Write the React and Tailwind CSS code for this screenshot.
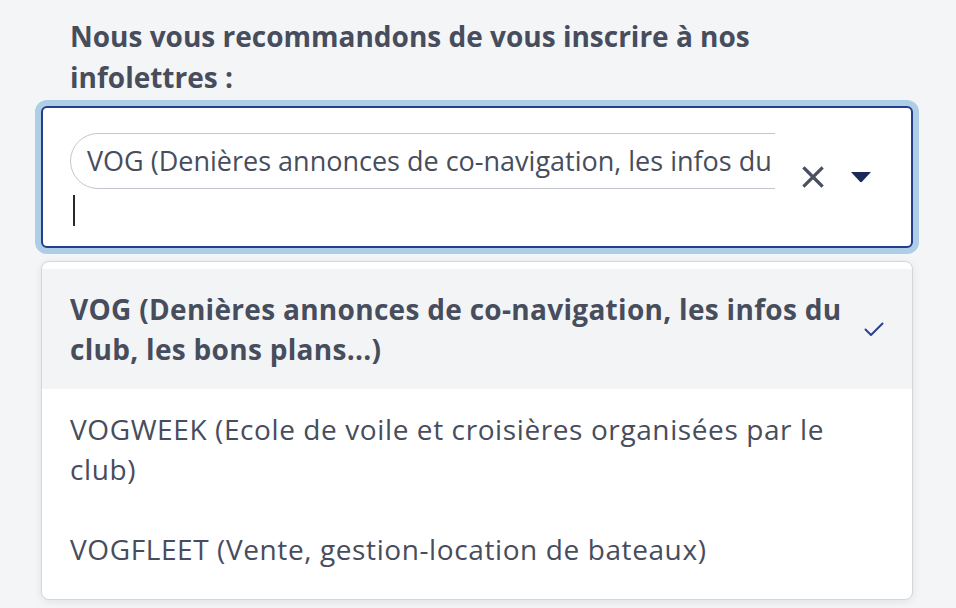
const options = [
  { id: "vog", label: "VOG (Denières annonces de co-navigation, les infos du club, les bons plans...)", selected: true },
  { id: "vogweek", label: "VOGWEEK (Ecole de voile et croisières organisées par le club)", selected: false },
  { id: "vogfleet", label: "VOGFLEET (Vente, gestion-location de bateaux)", selected: false },
];

function ClearIcon() {
  return (
    <svg width="22" height="22" viewBox="0 0 22 22" className="text-[#4b5060]">
      <path d="M2.5 2.5 L19.5 19.5 M19.5 2.5 L2.5 19.5" stroke="currentColor" strokeWidth="3.2" strokeLinecap="square" />
    </svg>
  );
}

function CaretIcon() {
  return (
    <svg width="20" height="11" viewBox="0 0 20 11" className="text-[#1b2a57]">
      <path d="M0 0 H20 L11.2 9.6 Q10 10.8 8.8 9.6 Z" fill="currentColor" />
    </svg>
  );
}

function CheckIcon() {
  return (
    <svg width="20" height="15" viewBox="0 0 20 15" className="text-[#2c418f]">
      <path d="M1.5 7.5 L7 13 L18.5 1.5" stroke="currentColor" strokeWidth="2" fill="none" strokeLinecap="round" strokeLinejoin="round" />
    </svg>
  );
}

export default function App() {
  return (
    <div className="min-h-screen bg-[#f4f5f7] text-[#474d5c]" style={{ fontFamily: '"Open Sans", "Noto Sans", sans-serif' }}>
      <div className="w-[872px] ml-[41px] pt-4">
        <label className="block w-[800px] pl-[29px] text-[28px] font-bold leading-[41px]">
          Nous vous recommandons de vous inscrire à nos infolettres :
        </label>

        <div className="mt-2 flex items-center bg-white border-2 border-[#243d8c] rounded-md ring-[6px] ring-[#aecde6]">
          <div className="flex flex-col pl-[27px] pt-[25px] pb-[20px] w-[732px]">
            <div className="w-[705px] overflow-hidden">
              <span className="inline-flex items-center h-[56px] pl-4 pr-5 border border-[#c2c5ce] rounded-full whitespace-nowrap text-[27px]">
                VOG (Denières annonces de co-navigation, les infos du club, les bons plans...)
              </span>
            </div>
            <div className="mt-[6px] ml-[3px] w-[2px] h-[31px] bg-[#2a2a2a]" />
          </div>
          <div className="flex items-center ml-[27px]">
            <ClearIcon />
            <div className="ml-[27px]">
              <CaretIcon />
            </div>
          </div>
        </div>

        <ul className="mt-[13px] bg-white border border-[#d5d6d9] rounded-lg shadow-[0_2px_8px_rgba(0,0,0,0.08)] pt-[7px] pb-[10px]">
          {options.map((o) => (
            <li
              key={o.id}
              className={
                o.selected
                  ? "flex items-center justify-between bg-[#f3f4f6] pl-[28px] pr-[28px] py-[20px]"
                  : "flex items-center justify-between pl-[28px] pr-[28px] py-[20px]"
              }
            >
              <span
                className={
                  o.selected
                    ? "w-[790px] text-[28px] leading-[40px] font-bold tracking-[0.3px]"
                    : "w-[790px] text-[28px] leading-[40px] tracking-[0.6px]"
                }
              >
                {o.label}
              </span>
              {o.selected && <CheckIcon />}
            </li>
          ))}
        </ul>
      </div>
    </div>
  );
}
